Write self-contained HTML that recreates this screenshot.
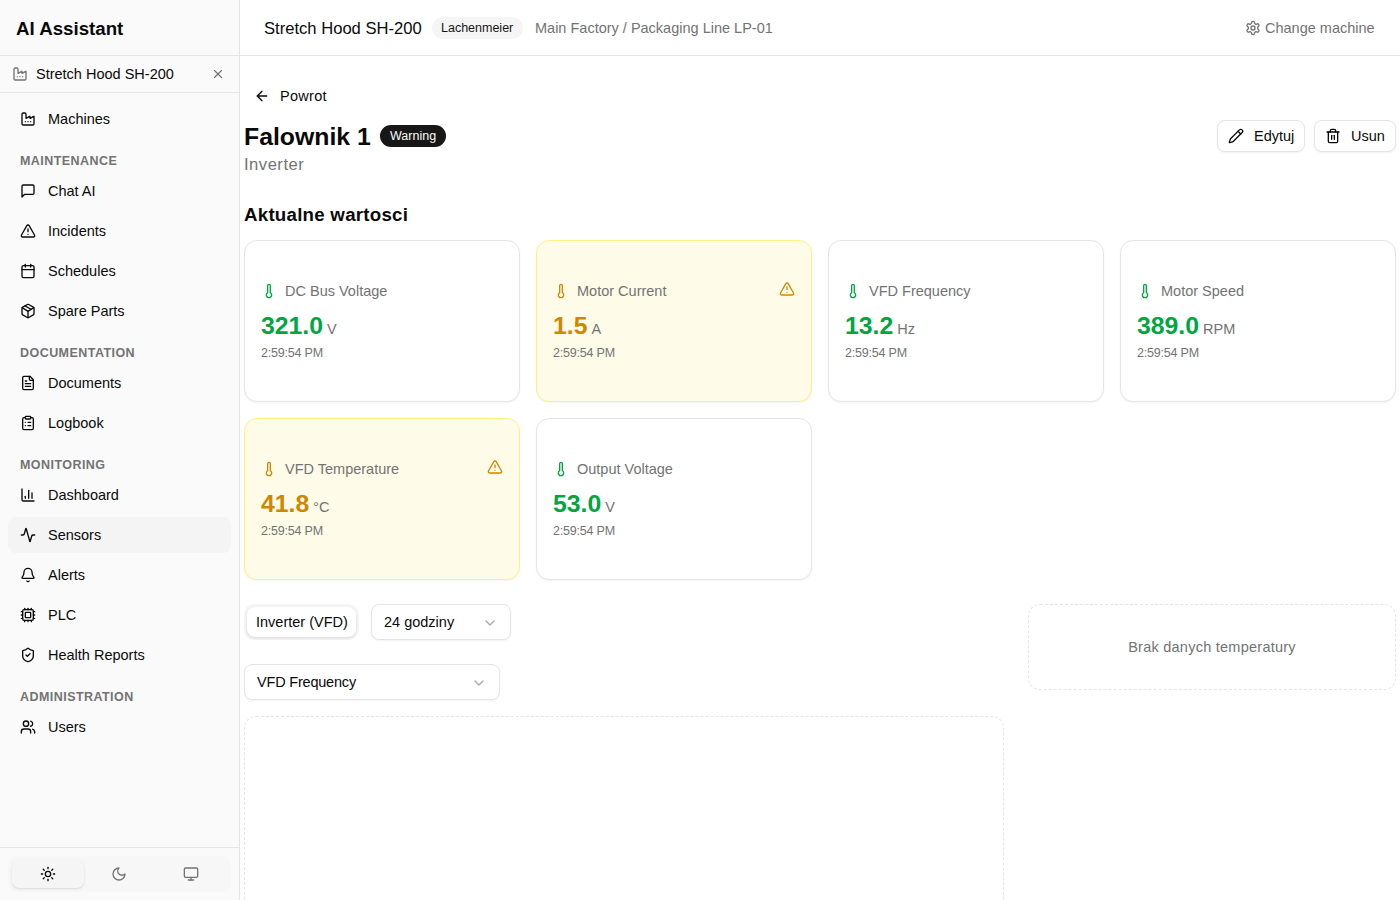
<!DOCTYPE html>
<html><head><meta charset="utf-8">
<style>
*{box-sizing:border-box;margin:0;padding:0}
html,body{width:1400px;height:900px;overflow:hidden;background:#fff;font-family:"Liberation Sans",sans-serif;color:#0a0a0a}
.abs{position:absolute}
svg.i{position:absolute;width:16px;height:16px;fill:none;stroke:currentColor;stroke-width:2;stroke-linecap:round;stroke-linejoin:round}
.t{position:absolute;white-space:nowrap;line-height:1}
#sb{position:absolute;left:0;top:0;width:240px;height:900px;background:#fafafa;border-right:1px solid #e5e5e5}
.hline{position:absolute;height:1px;background:#e5e5e5}
.nav{position:absolute;left:8px;width:223px;height:36px;border-radius:8px;color:#0a0a0a}
.nav svg.i{left:12px;top:10px}
.nav .t{left:40px;top:11px;font-size:14.5px}
.lbl{position:absolute;left:20px;font-size:12.5px;font-weight:700;color:#737373;letter-spacing:0.45px;white-space:nowrap;line-height:1}
#hdr{position:absolute;left:240px;top:0;width:1160px;height:56px;border-bottom:1px solid #e5e5e5;background:#fff}
.card{position:absolute;width:276px;height:162px;border:1px solid #e5e5e5;border-radius:13px;background:#fff;box-shadow:0 1px 2px rgba(0,0,0,0.05)}
.card.w{background:#fefce8;border-color:#fff085}
.card svg.th{left:16px;top:42px;color:#00a63e}
.card.w svg.th{color:#d08700}
.card .lab{left:40px;top:43px;font-size:14.5px;color:#737373}
.card .val{left:16px;top:73px;font-size:24.8px;font-weight:700;color:#00a63e}
.card.w .val{color:#d08700}
.card .unit{font-size:14.5px;font-weight:400;color:#737373;margin-left:4px}
.card .time{left:16px;top:106px;font-size:12.5px;letter-spacing:-0.2px;color:#737373}
.card svg.warn{left:534px;top:40px;color:#d08700}
.btn{position:absolute;height:32px;border:1px solid #e5e5e5;border-radius:8px;background:#fff;box-shadow:0 1px 2px rgba(0,0,0,0.05)}
.sel{position:absolute;height:36px;border:1px solid #e5e5e5;border-radius:8px;background:#fff;box-shadow:0 1px 2px rgba(0,0,0,0.05)}
.sel .t{left:12px;top:10px;font-size:14.5px}
.sel svg.i{top:10px;color:#737373;opacity:.6;stroke-width:2}
</style></head><body>

<!-- SIDEBAR -->
<div id="sb">
  <div class="t" style="left:16px;top:20px;font-size:18.7px;font-weight:700">AI Assistant</div>
  <div class="hline" style="left:0;top:55px;width:239px"></div>
  <svg class="i" viewBox="0 0 24 24" style="left:12px;top:66px;color:#737373"><path d="M12 16h.01"/><path d="M16 16h.01"/><path d="M3 19a2 2 0 0 0 2 2h14a2 2 0 0 0 2-2V8.5a.5.5 0 0 0-.769-.422l-4.462 2.844A.5.5 0 0 1 15 10.5v-2a.5.5 0 0 0-.769-.422L9.77 10.922A.5.5 0 0 1 9 10.5V5a2 2 0 0 0-2-2H5a2 2 0 0 0-2 2z"/><path d="M8 16h.01"/></svg>
  <div class="t" style="left:36px;top:67px;font-size:14.5px">Stretch Hood SH-200</div>
  <svg class="i" viewBox="0 0 24 24" style="left:211px;top:67px;width:14px;height:14px;color:#737373"><path d="M18 6 6 18"/><path d="m6 6 12 12"/></svg>
  <div class="hline" style="left:0;top:92px;width:239px"></div>

  <div class="nav" style="top:101px"><svg class="i" viewBox="0 0 24 24"><path d="M12 16h.01"/><path d="M16 16h.01"/><path d="M3 19a2 2 0 0 0 2 2h14a2 2 0 0 0 2-2V8.5a.5.5 0 0 0-.769-.422l-4.462 2.844A.5.5 0 0 1 15 10.5v-2a.5.5 0 0 0-.769-.422L9.77 10.922A.5.5 0 0 1 9 10.5V5a2 2 0 0 0-2-2H5a2 2 0 0 0-2 2z"/><path d="M8 16h.01"/></svg><div class="t">Machines</div></div>

  <div class="lbl" style="top:155px">MAINTENANCE</div>
  <div class="nav" style="top:173px"><svg class="i" viewBox="0 0 24 24"><path d="M21 15a2 2 0 0 1-2 2H7l-4 4V5a2 2 0 0 1 2-2h14a2 2 0 0 1 2 2z"/></svg><div class="t">Chat AI</div></div>
  <div class="nav" style="top:213px"><svg class="i" viewBox="0 0 24 24"><path d="m21.73 18-8-14a2 2 0 0 0-3.48 0l-8 14A2 2 0 0 0 4 21h16a2 2 0 0 0 1.73-3"/><path d="M12 9v4"/><path d="M12 17h.01"/></svg><div class="t">Incidents</div></div>
  <div class="nav" style="top:253px"><svg class="i" viewBox="0 0 24 24"><path d="M8 2v4"/><path d="M16 2v4"/><rect width="18" height="18" x="3" y="4" rx="2"/><path d="M3 10h18"/></svg><div class="t">Schedules</div></div>
  <div class="nav" style="top:293px"><svg class="i" viewBox="0 0 24 24"><path d="M11 21.73a2 2 0 0 0 2 0l7-4A2 2 0 0 0 21 16V8a2 2 0 0 0-1-1.73l-7-4a2 2 0 0 0-2 0l-7 4A2 2 0 0 0 3 8v8a2 2 0 0 0 1 1.73z"/><path d="M12 22V12"/><path d="m3.3 7 7.703 4.734a2 2 0 0 0 1.994 0L20.7 7"/><path d="m7.5 4.27 9 5.15"/></svg><div class="t">Spare Parts</div></div>

  <div class="lbl" style="top:347px">DOCUMENTATION</div>
  <div class="nav" style="top:365px"><svg class="i" viewBox="0 0 24 24"><path d="M15 2H6a2 2 0 0 0-2 2v16a2 2 0 0 0 2 2h12a2 2 0 0 0 2-2V7Z"/><path d="M14 2v4a2 2 0 0 0 2 2h4"/><path d="M10 9H8"/><path d="M16 13H8"/><path d="M16 17H8"/></svg><div class="t">Documents</div></div>
  <div class="nav" style="top:405px"><svg class="i" viewBox="0 0 24 24"><rect width="8" height="4" x="8" y="2" rx="1" ry="1"/><path d="M16 4h2a2 2 0 0 1 2 2v14a2 2 0 0 1-2 2H6a2 2 0 0 1-2-2V6a2 2 0 0 1 2-2h2"/><path d="M12 11h4"/><path d="M12 16h4"/><path d="M8 11h.01"/><path d="M8 16h.01"/></svg><div class="t">Logbook</div></div>

  <div class="lbl" style="top:459px">MONITORING</div>
  <div class="nav" style="top:477px"><svg class="i" viewBox="0 0 24 24"><path d="M3 3v16a2 2 0 0 0 2 2h16"/><path d="M18 17V9"/><path d="M13 17V5"/><path d="M8 17v-3"/></svg><div class="t">Dashboard</div></div>
  <div class="nav" style="top:517px;background:#f4f4f4"><svg class="i" viewBox="0 0 24 24"><path d="M22 12h-2.48a2 2 0 0 0-1.93 1.46l-2.35 8.36a.25.25 0 0 1-.48 0L9.24 2.18a.25.25 0 0 0-.48 0l-2.35 8.36A2 2 0 0 1 4.49 12H2"/></svg><div class="t">Sensors</div></div>
  <div class="nav" style="top:557px"><svg class="i" viewBox="0 0 24 24"><path d="M10.268 21a2 2 0 0 0 3.464 0"/><path d="M3.262 15.326A1 1 0 0 0 4 17h16a1 1 0 0 0 .74-1.673C19.41 13.956 18 12.499 18 8A6 6 0 0 0 6 8c0 4.499-1.411 5.956-2.738 7.326"/></svg><div class="t">Alerts</div></div>
  <div class="nav" style="top:597px"><svg class="i" viewBox="0 0 24 24"><path d="M12 20v2"/><path d="M12 2v2"/><path d="M17 20v2"/><path d="M17 2v2"/><path d="M2 12h2"/><path d="M2 17h2"/><path d="M2 7h2"/><path d="M20 12h2"/><path d="M20 17h2"/><path d="M20 7h2"/><path d="M7 20v2"/><path d="M7 2v2"/><rect x="4" y="4" width="16" height="16" rx="2"/><rect x="8" y="8" width="8" height="8" rx="1"/></svg><div class="t">PLC</div></div>
  <div class="nav" style="top:637px"><svg class="i" viewBox="0 0 24 24"><path d="M20 13c0 5-3.5 7.5-7.66 8.95a1 1 0 0 1-.67-.01C7.5 20.5 4 18 4 13V6a1 1 0 0 1 1-1c2 0 4.5-1.2 6.24-2.72a1.17 1.17 0 0 1 1.520 0C14.51 3.810 17 5 19 5a1 1 0 0 1 1 1z"/><path d="m9 12 2 2 4-4"/></svg><div class="t">Health Reports</div></div>

  <div class="lbl" style="top:691px">ADMINISTRATION</div>
  <div class="nav" style="top:709px"><svg class="i" viewBox="0 0 24 24"><path d="M16 21v-2a4 4 0 0 0-4-4H6a4 4 0 0 0-4 4v2"/><circle cx="9" cy="7" r="4"/><path d="M22 21v-2a4 4 0 0 0-3-3.87"/><path d="M16 3.13a4 4 0 0 1 0 7.75"/></svg><div class="t">Users</div></div>

  <div class="hline" style="left:0;top:847px;width:239px"></div>
  <div class="abs" style="left:8px;top:856px;width:223px;height:36px;border-radius:10px;background:#f7f7f7"></div>
  <div class="abs" style="left:12px;top:860px;width:72px;height:28px;border-radius:7px;background:#f5f5f5;box-shadow:0 1px 3px rgba(0,0,0,0.1),0 1px 2px -1px rgba(0,0,0,0.1)"></div>
  <svg class="i" viewBox="0 0 24 24" style="left:40px;top:866px;color:#0a0a0a"><circle cx="12" cy="12" r="4"/><path d="M12 2v2"/><path d="M12 20v2"/><path d="m4.93 4.93 1.41 1.41"/><path d="m17.66 17.66 1.41 1.41"/><path d="M2 12h2"/><path d="M20 12h2"/><path d="m6.34 17.66-1.41 1.41"/><path d="m19.07 4.93-1.41 1.41"/></svg>
  <svg class="i" viewBox="0 0 24 24" style="left:111px;top:866px;color:#737373"><path d="M12 3a6 6 0 0 0 9 9 9 9 0 1 1-9-9Z"/></svg>
  <svg class="i" viewBox="0 0 24 24" style="left:183px;top:866px;color:#737373"><rect width="20" height="14" x="2" y="3" rx="2"/><line x1="8" x2="16" y1="21" y2="21"/><line x1="12" x2="12" y1="17" y2="21"/></svg>
</div>

<!-- HEADER -->
<div id="hdr">
  <div class="t" style="left:24px;top:21px;font-size:16.6px;font-weight:500">Stretch Hood SH-200</div>
  <div class="abs" style="left:192px;top:17px;width:91px;height:22px;border-radius:11px;background:#f5f5f5"></div>
  <div class="t" style="left:201px;top:22px;font-size:12.5px;font-weight:500;color:#171717">Lachenmeier</div>
  <div class="t" style="left:295px;top:21px;font-size:14.5px;color:#737373">Main Factory / Packaging Line LP-01</div>
  <svg class="i" viewBox="0 0 24 24" style="left:1005px;top:20px;color:#737373"><path d="M12.22 2h-.44a2 2 0 0 0-2 2v.18a2 2 0 0 1-1 1.73l-.43.25a2 2 0 0 1-2 0l-.15-.08a2 2 0 0 0-2.73.73l-.22.38a2 2 0 0 0 .73 2.730l.15.1a2 2 0 0 1 1 1.72v.51a2 2 0 0 1-1 1.74l-.15.09a2 2 0 0 0-.73 2.73l.22.38a2 2 0 0 0 2.73.73l.15-.08a2 2 0 0 1 2 0l.43.25a2 2 0 0 1 1 1.73V20a2 2 0 0 0 2 2h.44a2 2 0 0 0 2-2v-.18a2 2 0 0 1 1-1.73l.43-.25a2 2 0 0 1 2 0l.15.08a2 2 0 0 0 2.73-.73l.22-.39a2 2 0 0 0-.73-2.73l-.15-.08a2 2 0 0 1-1-1.74v-.5a2 2 0 0 1 1-1.74l.15-.09a2 2 0 0 0 .73-2.73l-.22-.38a2 2 0 0 0-2.73-.73l-.15.08a2 2 0 0 1-2 0l-.43-.25a2 2 0 0 1-1-1.73V4a2 2 0 0 0-2-2z"/><circle cx="12" cy="12" r="3"/></svg>
  <div class="t" style="left:1025px;top:21px;font-size:14.5px;color:#737373">Change machine</div>
</div>

<!-- MAIN -->
<div id="main">
  <svg class="i" viewBox="0 0 24 24" style="left:254px;top:88px"><path d="m12 19-7-7 7-7"/><path d="M19 12H5"/></svg>
  <div class="t" style="left:280px;top:89px;font-size:14.5px;font-weight:500;letter-spacing:0.3px">Powrot</div>

  <div class="t" style="left:244px;top:125px;font-size:24.8px;font-weight:700">Falownik 1</div>
  <div class="abs" style="left:380px;top:125px;width:66px;height:22px;border-radius:11px;background:#171717"></div>
  <div class="t" style="left:390px;top:130px;font-size:12.5px;font-weight:500;color:#fafafa">Warning</div>
  <div class="t" style="left:244px;top:157px;font-size:16.6px;letter-spacing:0.5px;color:#737373">Inverter</div>

  <div class="btn" style="left:1217px;top:120px;width:88px"></div>
  <svg class="i" viewBox="0 0 24 24" style="left:1228px;top:128px"><path d="M21.174 6.812a1 1 0 0 0-3.986-3.987L3.842 16.174a2 2 0 0 0-.5.83l-1.321 4.352a.5.5 0 0 0 .623.622l4.353-1.32a2 2 0 0 0 .83-.497z"/><path d="m15 5 4 4"/></svg>
  <div class="t" style="left:1254px;top:129px;font-size:14.5px;font-weight:500">Edytuj</div>
  <div class="btn" style="left:1314px;top:120px;width:82px"></div>
  <svg class="i" viewBox="0 0 24 24" style="left:1325px;top:128px"><path d="M3 6h18"/><path d="M19 6v14c0 1-1 2-2 2H7c-1 0-2-1-2-2V6"/><path d="M8 6V4c0-1 1-2 2-2h4c1 0 2 1 2 2v2"/><line x1="10" x2="10" y1="11" y2="17"/><line x1="14" x2="14" y1="11" y2="17"/></svg>
  <div class="t" style="left:1351px;top:129px;font-size:14.5px;font-weight:500">Usun</div>

  <div class="t" style="left:244px;top:206px;font-size:18.7px;font-weight:700;letter-spacing:0.25px">Aktualne wartosci</div>

  <!-- CARDS -->
  <div class="card" style="left:244px;top:240px"><svg class="i th" viewBox="0 0 24 24"><path d="M14 4v10.54a4 4 0 1 1-4 0V4a2 2 0 0 1 4 0Z"/></svg><div class="t lab">DC Bus Voltage</div><div class="t val">321.0<span class="unit">V</span></div><div class="t time">2:59:54 PM</div></div>
  <div class="card w" style="left:536px;top:240px"><svg class="i th" viewBox="0 0 24 24"><path d="M14 4v10.54a4 4 0 1 1-4 0V4a2 2 0 0 1 4 0Z"/></svg><div class="t lab">Motor Current</div><svg class="i warn" viewBox="0 0 24 24" style="left:242px;top:40px;color:#d08700"><path d="m21.73 18-8-14a2 2 0 0 0-3.48 0l-8 14A2 2 0 0 0 4 21h16a2 2 0 0 0 1.73-3"/><path d="M12 9v4"/><path d="M12 17h.01"/></svg><div class="t val">1.5<span class="unit">A</span></div><div class="t time">2:59:54 PM</div></div>
  <div class="card" style="left:828px;top:240px"><svg class="i th" viewBox="0 0 24 24"><path d="M14 4v10.54a4 4 0 1 1-4 0V4a2 2 0 0 1 4 0Z"/></svg><div class="t lab">VFD Frequency</div><div class="t val">13.2<span class="unit">Hz</span></div><div class="t time">2:59:54 PM</div></div>
  <div class="card" style="left:1120px;top:240px"><svg class="i th" viewBox="0 0 24 24"><path d="M14 4v10.54a4 4 0 1 1-4 0V4a2 2 0 0 1 4 0Z"/></svg><div class="t lab">Motor Speed</div><div class="t val">389.0<span class="unit">RPM</span></div><div class="t time">2:59:54 PM</div></div>
  <div class="card w" style="left:244px;top:418px"><svg class="i th" viewBox="0 0 24 24"><path d="M14 4v10.54a4 4 0 1 1-4 0V4a2 2 0 0 1 4 0Z"/></svg><div class="t lab">VFD Temperature</div><svg class="i warn" viewBox="0 0 24 24" style="left:242px;top:40px;color:#d08700"><path d="m21.73 18-8-14a2 2 0 0 0-3.48 0l-8 14A2 2 0 0 0 4 21h16a2 2 0 0 0 1.73-3"/><path d="M12 9v4"/><path d="M12 17h.01"/></svg><div class="t val">41.8<span class="unit">°C</span></div><div class="t time">2:59:54 PM</div></div>
  <div class="card" style="left:536px;top:418px"><svg class="i th" viewBox="0 0 24 24"><path d="M14 4v10.54a4 4 0 1 1-4 0V4a2 2 0 0 1 4 0Z"/></svg><div class="t lab">Output Voltage</div><div class="t val">53.0<span class="unit">V</span></div><div class="t time">2:59:54 PM</div></div>

  <!-- controls -->
  <div class="abs" style="left:244px;top:604px;width:115px;height:36px;border-radius:10px;background:#f5f5f5"></div>
  <div class="abs" style="left:247px;top:607px;width:109px;height:30px;border-radius:8px;background:#fff;box-shadow:0 1px 3px rgba(0,0,0,0.1),0 1px 2px -1px rgba(0,0,0,0.1)"></div>
  <div class="t" style="left:256px;top:615px;font-size:14.5px;font-weight:500">Inverter (VFD)</div>

  <div class="sel" style="left:371px;top:604px;width:140px"><div class="t">24 godziny</div><svg class="i" viewBox="0 0 24 24" style="left:110px"><path d="m6 9 6 6 6-6"/></svg></div>
  <div class="sel" style="left:244px;top:664px;width:256px"><div class="t" style="letter-spacing:-0.2px">VFD Frequency</div><svg class="i" viewBox="0 0 24 24" style="left:226px"><path d="m6 9 6 6 6-6"/></svg></div>

  <div class="abs" style="left:244px;top:716px;width:760px;height:260px;border:1px dashed #e5e5e5;border-radius:12px"></div>
  <div class="abs" style="left:1028px;top:604px;width:368px;height:86px;border:1px dashed #e5e5e5;border-radius:12px"></div>
  <div class="t" style="left:1028px;width:368px;text-align:center;top:640px;font-size:14.5px;letter-spacing:0.25px;color:#737373">Brak danych temperatury</div>
</div>
</body></html>
